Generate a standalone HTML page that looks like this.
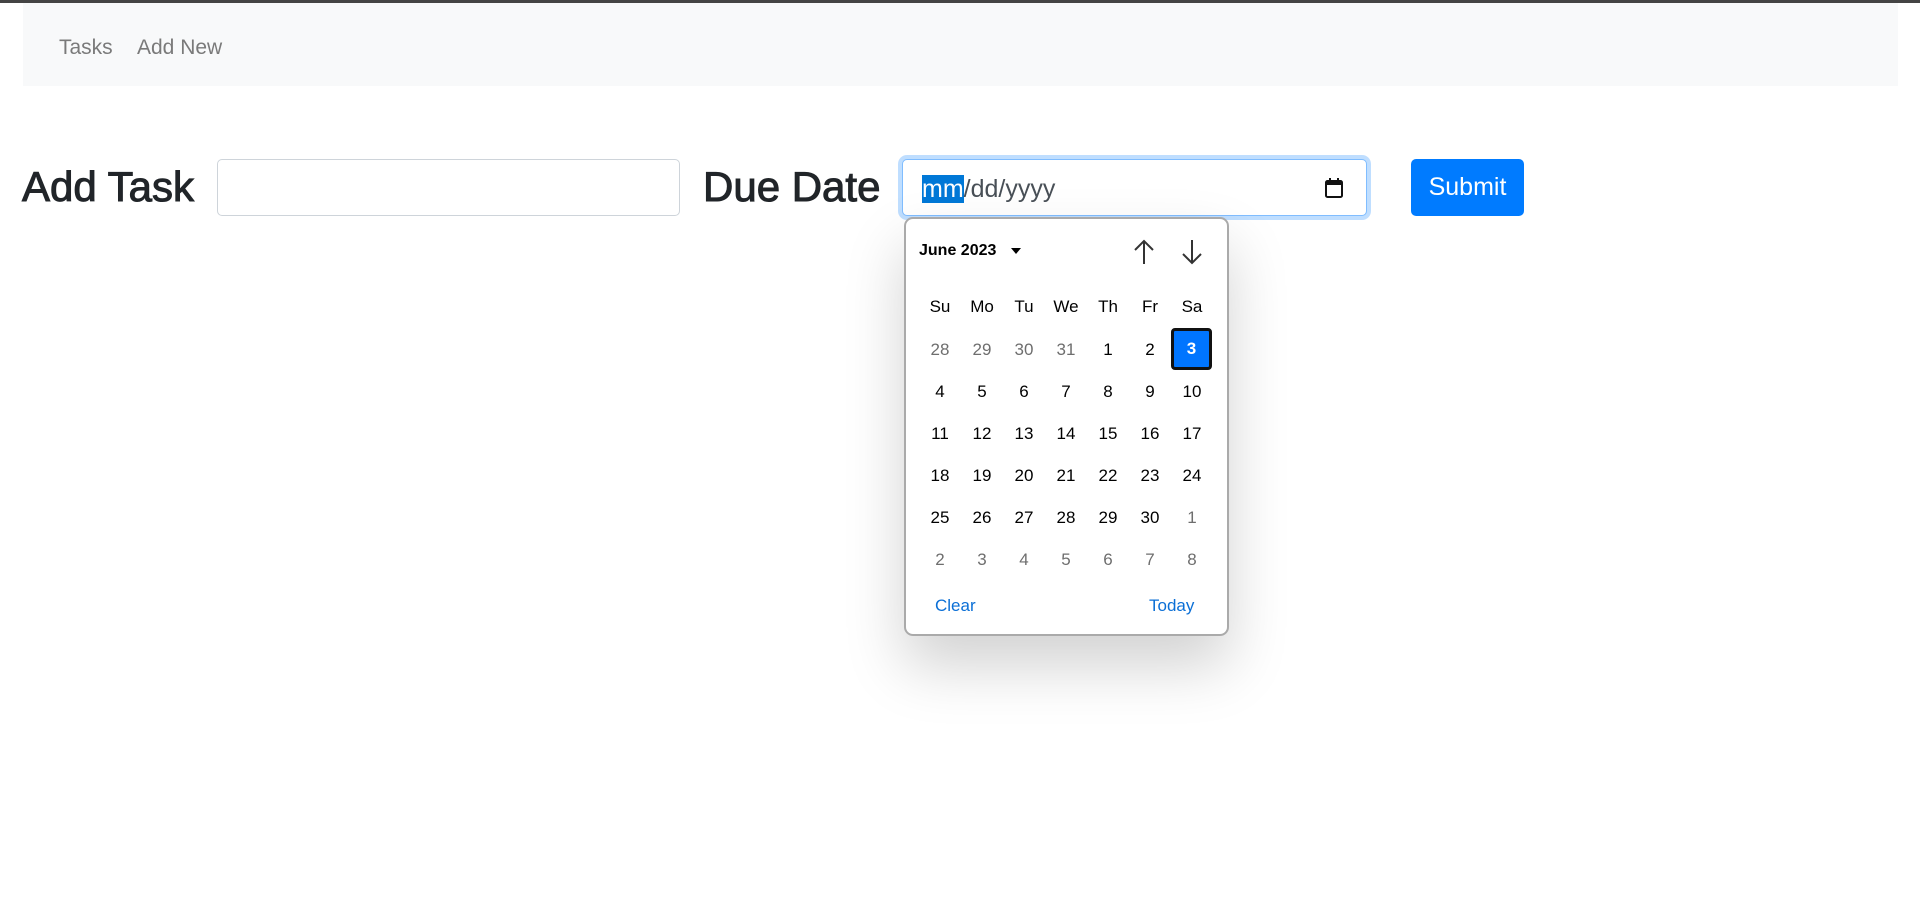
<!DOCTYPE html>
<html><head><meta charset="utf-8"><style>
*{box-sizing:border-box;margin:0;padding:0}
body{width:1920px;height:900px;background:#fff;font-family:"Liberation Sans",sans-serif;position:relative;overflow:hidden}
.top{position:absolute;left:0;top:0;width:1920px;height:3px;background:#444}
.nav{position:absolute;left:23px;top:3px;width:1875px;height:83px;background:#f8f9fa}
.nav span{position:absolute;top:33px;font-size:21px;color:#7a7a7a}
.h{position:absolute;font-size:42px;color:#212529;top:162px;line-height:50px;-webkit-text-stroke:1px #212529}
.inp{position:absolute;border:1px solid #ced4da;border-radius:5px;background:#fff}
.date{position:absolute;left:902px;top:159px;width:465px;height:57px;border:1px solid #80bdff;border-radius:5px;box-shadow:0 0 0 4px rgba(0,123,255,.25);background:#fff}
.date .t{position:absolute;left:19px;top:14px;font-size:25px;color:#495057;line-height:30px}
.date .t b{font-weight:normal;background:#0078d7;color:#fff}
.btn{position:absolute;left:1411px;top:159px;width:113px;height:57px;background:#007bff;border-radius:5px;color:#fff;font-size:25px;text-align:center;line-height:57px}
.pop{position:absolute;left:904px;top:217px;width:325px;height:419px;border:2px solid #aaa;border-radius:9px;background:#fff;box-shadow:0 30px 60px rgba(0,0,0,.18)}
.c{position:absolute;width:42px;text-align:center;font-size:17px;line-height:20px;color:#000}
.g{color:#6e6e6e}
.sel{position:absolute;left:1171px;top:328px;width:41px;height:42px;background:#0075ff;border:3px solid #111;border-radius:4px;color:#fff;font-weight:bold;font-size:17px;text-align:center;line-height:36px}
.lk{position:absolute;top:596px;font-size:17px;color:#0b6fd6}
</style></head><body>
<div class="top"></div>
<div class="nav"><span style="left:36px">Tasks</span><span style="left:114px">Add New</span></div>
<div class="h" style="left:22px">Add Task</div>
<div class="inp" style="left:217px;top:159px;width:463px;height:57px"></div>
<div class="h" style="left:703px">Due Date</div>
<div class="date"><div class="t"><b>mm</b>/dd/yyyy</div>
<svg style="position:absolute;left:421px;top:17px" width="20" height="22" viewBox="0 0 20 22"><rect x="2" y="4" width="16" height="16" rx="1.5" fill="none" stroke="#111" stroke-width="2"/><rect x="2" y="4" width="16" height="4" fill="#111"/><rect x="5" y="1" width="2" height="4" fill="#111"/><rect x="13" y="1" width="2" height="4" fill="#111"/></svg></div>
<div class="btn">Submit</div>
<div class="pop"></div>
<div style="position:absolute;left:919px;top:242px;font-size:16px;font-weight:bold;color:#000">June 2023</div>
<svg style="position:absolute;left:1010px;top:247px" width="12" height="8" viewBox="0 0 12 8"><path d="M1 1H11L6 7Z" fill="#000"/></svg>
<svg style="position:absolute;left:1131px;top:238px" width="80" height="28" viewBox="0 0 80 28"><path d="M13 26V3M4 12L13 3L22 12" fill="none" stroke="#333" stroke-width="2"/><path d="M61 2V25M52 16L61 25L70 16" fill="none" stroke="#333" stroke-width="2"/></svg>
<div id="cal"></div>
<div class="sel">3</div>
<div class="lk" style="left:935px">Clear</div>
<div class="lk" style="left:1149px">Today</div>
<script>
var xs=[940,982,1024,1066,1108,1150,1192],h='';
var wd=['Su','Mo','Tu','We','Th','Fr','Sa'];
wd.forEach(function(d,i){h+='<div class="c" style="left:'+(xs[i]-21)+'px;top:297px">'+d+'</div>'});
var days=[];[28,29,30,31].forEach(function(d){days.push([d,1])});
for(var d=1;d<=30;d++)days.push([d,0]);for(d=1;d<=8;d++)days.push([d,1]);
days.forEach(function(v,k){var r=Math.floor(k/7),c=k%7;if(k==6)return;
h+='<div class="c'+(v[1]?' g':'')+'" style="left:'+(xs[c]-21)+'px;top:'+(340+r*42)+'px">'+v[0]+'</div>'});
document.getElementById('cal').innerHTML=h;
</script>
</body></html>
